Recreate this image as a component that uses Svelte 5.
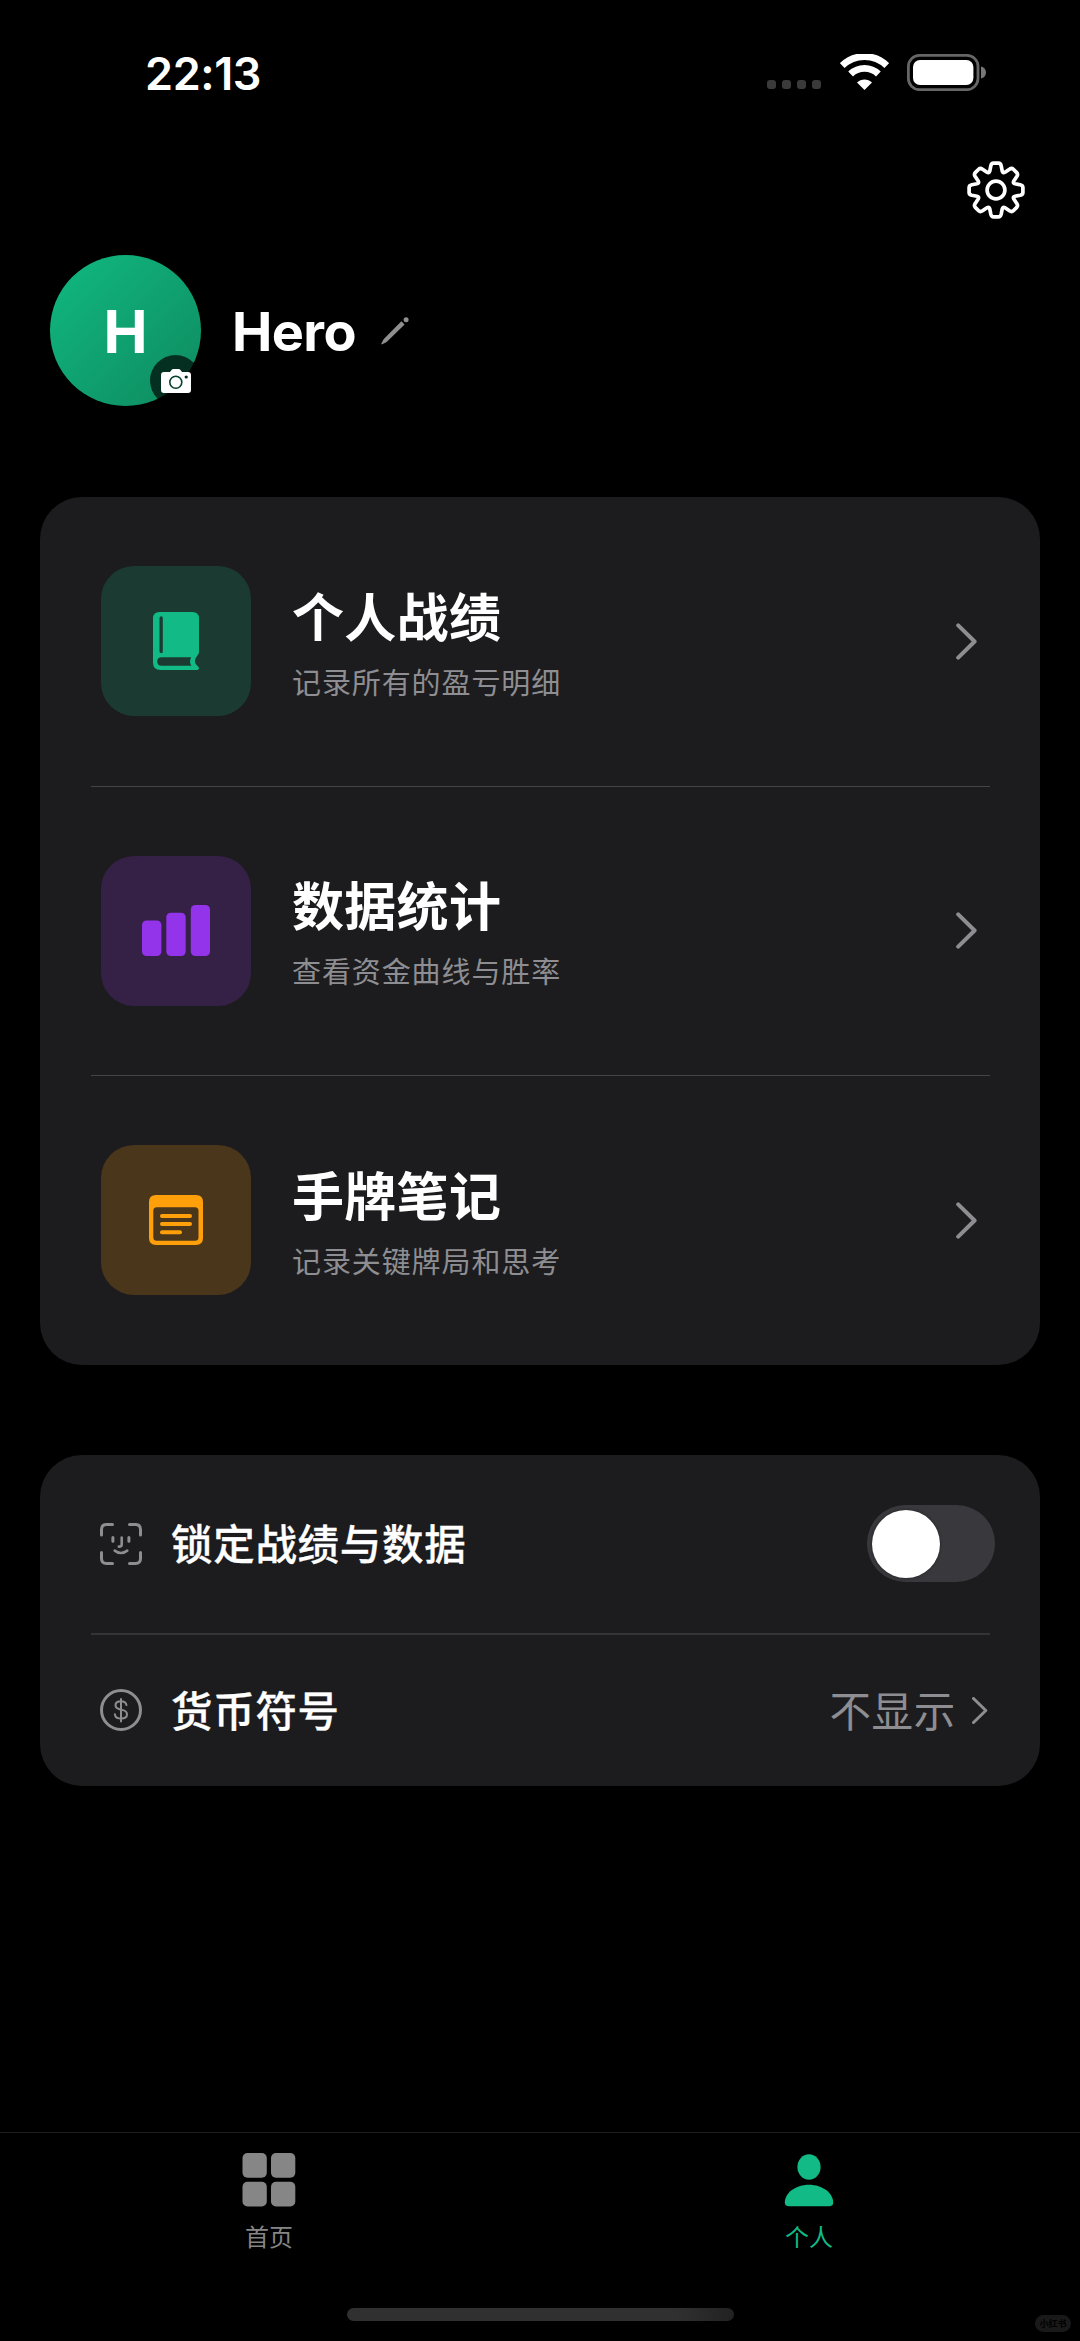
<!--
  Profile screen
  Account header, feature list, settings and the bottom tab bar
-->
<script lang="ts">
  const features = [
    { id: "records", title: "个人战绩", desc: "记录所有的盈亏明细" },
    { id: "stats", title: "数据统计", desc: "查看资金曲线与胜率" },
    { id: "notes", title: "手牌笔记", desc: "记录关键牌局和思考" },
  ];

  let locked = $state(false);
  let activeTab = $state("profile");

  // Eight identical teeth rotated around the centre of the gear
  function gearPath() {
    const rotate = (x: number, y: number, i: number) => {
      const a = (i * Math.PI) / 4;
      const px = x * Math.cos(a) - y * Math.sin(a);
      const py = x * Math.sin(a) + y * Math.cos(a);
      return `${px.toFixed(2)} ${py.toFixed(2)}`;
    };
    let d = "";
    for (let i = 0; i < 8; i++) {
      const p = (x: number, y: number) => rotate(x, y, i);
      d += `${i === 0 ? "M" : "L"}${p(-6.2, -19)}L${p(-5.2, -24.2)}Q${p(-4.6, -26.9)} ${p(-2.4, -26.9)}`;
      d += `L${p(2.4, -26.9)}Q${p(4.6, -26.9)} ${p(5.2, -24.2)}L${p(6.2, -19)}Q${p(6.8, -16.6)} ${rotate(-6.2, -19, i + 1)}`;
    }
    return d + "Z";
  }
</script>

<div class="screen">
  <div class="status">
    <span class="status__time">22:13</span>
    <div class="status__icons">
      <div class="status__dots"><i></i><i></i><i></i><i></i></div>
      <svg class="status__wifi" width="49" height="37" viewBox="0 0 49 37" fill="none">
        <path d="M2.2 11.6a32 32 0 0 1 44.6 0" stroke="#fff" stroke-width="6.8" />
        <path d="M10.6 20a20 20 0 0 1 27.8 0" stroke="#fff" stroke-width="6.8" />
        <path d="M24.5 36 17 28.6c4.2-4.2 10.8-4.2 15 0z" fill="#fff" />
      </svg>
      <svg class="status__battery" width="80" height="37" viewBox="0 0 80 37">
        <rect x="1.4" y="1.4" width="69.6" height="34.2" rx="11" fill="none" stroke="#666" stroke-width="2.8" />
        <rect x="6" y="6" width="60.4" height="25" rx="7" fill="#fff" />
        <path d="M74 12.5c3 .6 5 3 5 6s-2 5.4-5 6z" fill="#777" />
      </svg>
    </div>
  </div>

  <div class="toolbar">
    <button class="icon-btn" aria-label="设置">
      <svg width="60" height="60" viewBox="-30 -30 60 60" fill="none" stroke="#fff" stroke-width="3.7" stroke-linejoin="round">
        <path d={gearPath()} />
        <circle r="8.9" />
      </svg>
    </button>
  </div>

  <header class="profile">
    <div class="avatar">
      H
      <span class="avatar__badge">
        <svg width="30" height="24" viewBox="0 0 30 24">
          <path d="M3 3h6l1.5-2Q11.2 0 12.5 0h5q1.3 0 2 1L21 3h6q3 0 3 3v15q0 3-3 3H3q-3 0-3-3V6q0-3 3-3z" fill="#fff" />
          <circle cx="14.8" cy="13.3" r="6" fill="none" stroke="#07402c" stroke-width="1.6" />
          <circle cx="25.2" cy="8" r="1.6" fill="#06291d" />
        </svg>
      </span>
    </div>
    <h1 class="profile__name">Hero</h1>
    <svg class="profile__edit" width="28" height="28" viewBox="0 0 28 28" fill="#8f8f8f">
      <path d="M20.4 4.2 23.6 7.4 6.2 24.4Q5.6 25 4.8 25.4L1.2 27.3Q0 27.6.4 26.4L2.3 22.8Q2.7 22 3.3 21.4z" />
      <circle cx="25.1" cy="2.7" r="2.5" />
    </svg>
  </header>

  <section class="card">
    {#each features as item}
      <div class="feature">
        <div class="feature__icon feature__icon--{item.id}">
          {#if item.id === "records"}
            <svg width="46" height="58" viewBox="0 0 46 58">
              <path
                fill="#12bb85"
                fill-rule="evenodd"
                d="M6.5 0h33q6.5 0 6.5 6.5V40q0 1.6-1.2 3-3 3.4-3 6t3 5.2Q46 55.3 46 56.3T44.6 58H7.5Q0 58 0 50.5V6.5Q0 0 6.5 0zM8.2 4.2Q6.5 4.2 6.5 6V39.5q0 1.7 1.7 1.7t1.6-1.7V6q0-1.8-1.6-1.8zM8.8 45.2Q4.2 45.2 4.2 49.4t4.6 4.4H38.5Q37 51.6 37 49.4t1.2-4.2z"
              />
            </svg>
          {:else if item.id === "stats"}
            <svg width="68" height="51" viewBox="0 0 68 51" fill="#9333ea">
              <rect y="15.5" width="19.4" height="35.5" rx="4.5" />
              <rect x="24.3" y="7.8" width="19.4" height="43.2" rx="4.5" />
              <rect x="48.8" width="19.2" height="51" rx="4.5" />
            </svg>
          {:else}
            <svg width="54" height="50" viewBox="0 0 54 50" fill="#ff9f0a">
              <path
                fill-rule="evenodd"
                d="M7 0h40q7 0 7 7v36q0 7-7 7H7q-7 0-7-7V7Q0 0 7 0zM7.8 12.3Q4.3 12.3 4.3 15.8V42.3Q4.3 45.8 7.8 45.8H46Q49.5 45.8 49.5 42.3V15.8Q49.5 12.3 46 12.3z"
              />
              <rect x="11" y="19" width="32" height="4" rx="2" />
              <rect x="11" y="27" width="32" height="4" rx="2" />
              <rect x="11" y="35.2" width="22" height="4" rx="2" />
            </svg>
          {/if}
        </div>
        <div class="feature__body">
          <h2 class="feature__title">{item.title}</h2>
          <p class="feature__desc">{item.desc}</p>
        </div>
        <svg class="feature__chevron" width="22" height="37" viewBox="0 0 22 37">
          <path d="M2.2 2.3 18.6 18.5 2.2 34.7" />
        </svg>
      </div>
    {/each}
  </section>

  <section class="card card--settings">
    <div class="setting setting--lock">
      <svg width="42" height="42" viewBox="0 0 42 42" fill="none" stroke="#8e8e92" stroke-width="3" stroke-linecap="round">
        <path d="M1.5 12V6.5q0-5 5-5H12.5M29.5 1.5h6q5 0 5 5V12M40.5 29.5v6q0 5-5 5H29.5M12.5 40.5H6.5q-5 0-5-5V29.5" />
        <path d="M12.9 14.6v3.6M28.9 14.6v3.6" />
        <path d="M21.7 14.6v7q0 2-2 2h-.9" stroke-width="2.6" />
        <path d="M14.7 27.6q6.2 4.8 12.6 0" stroke-width="2.6" />
      </svg>
      <span class="setting__label">锁定战绩与数据</span>
      <button
        class="switch"
        class:switch--on={locked}
        role="switch"
        aria-checked={locked}
        aria-label="锁定战绩与数据"
        onclick={() => (locked = !locked)}
      >
        <span class="switch__thumb"></span>
      </button>
    </div>
    <div class="setting setting--currency">
      <svg width="42" height="42" viewBox="0 0 42 42" fill="none" stroke="#8e8e92">
        <circle cx="21" cy="21" r="19.5" stroke-width="3" />
        <path
          d="M26.5 16.1c-.4-2.4-2.5-3.9-5.5-3.9-3.2 0-5.5 1.6-5.5 4.1 0 2.2 1.5 3.4 4.7 4.1l1.8.5c3.4.8 5 2.1 5 4.4 0 2.6-2.3 4.3-5.9 4.3s-5.9-1.6-6.2-4.3M21 10v22.4"
          stroke-width="2"
          stroke-linecap="round"
        />
      </svg>
      <span class="setting__label">货币符号</span>
      <span class="setting__value">不显示</span>
      <svg class="setting__chevron" width="16" height="27" viewBox="0 0 16 27">
        <path d="M1.5 1.5 13.8 13.5 1.5 25.5" />
      </svg>
    </div>
  </section>

  <nav class="tabs">
    <button class="tab" class:tab--active={activeTab === "home"} onclick={() => (activeTab = "home")}>
      <svg width="54" height="54" viewBox="0 0 54 54" fill="currentColor">
        <rect x=".5" width="24.3" height="24.7" rx="5" />
        <rect x="29" width="24.3" height="24.7" rx="5" />
        <rect x=".5" y="28.7" width="24.3" height="24.7" rx="5" />
        <rect x="29" y="28.7" width="24.3" height="24.7" rx="5" />
      </svg>
      <span>首页</span>
    </button>
    <button class="tab" class:tab--active={activeTab === "profile"} onclick={() => (activeTab = "profile")}>
      <svg width="54" height="54" viewBox="0 0 54 54" fill="currentColor">
        <ellipse cx="27" cy="14" rx="11.6" ry="12.7" />
        <path d="M7 53.3Q2.8 53.3 2.8 49.5C2.8 40 13.5 31.7 27 31.7S51.2 40 51.2 49.5Q51.2 53.3 47 53.3z" />
      </svg>
      <span>个人</span>
    </button>
  </nav>

  <div class="home-indicator"></div>
  <span class="watermark">小红书</span>
</div>

<style>
  :global(body) {
    margin: 0;
    background: #000;
  }

  .screen {
    position: relative;
    display: flex;
    flex-direction: column;
    box-sizing: border-box;
    width: 1080px;
    height: 2341px;
    overflow: hidden;
    background: #000;
    color: #fff;
    font-family: Inter, "Noto Sans CJK SC", sans-serif;
  }

  svg {
    display: block;
    flex-shrink: 0;
  }

  button {
    padding: 0;
    border: none;
    background: none;
    font: inherit;
    color: inherit;
    cursor: pointer;
  }

  /* Status bar */
  .status {
    display: flex;
    justify-content: space-between;
    align-items: center;
    height: 145px;
    padding: 0 93px 0 145px;
    box-sizing: border-box;
  }

  .status__time {
    padding-top: 2px;
    font-size: 45px;
    font-weight: 600;
    line-height: 54px;
    letter-spacing: -0.4px;
  }

  .status__icons {
    display: flex;
    align-items: center;
  }

  .status__dots {
    display: flex;
    gap: 6px;
    margin: 24px 19px 0 0;
  }

  .status__dots i {
    width: 9px;
    height: 9px;
    border-radius: 3px;
    background: #3a3a3a;
  }

  .status__wifi {
    margin-right: 18px;
  }

  /* Toolbar */
  .toolbar {
    display: flex;
    justify-content: flex-end;
    height: 89px;
    padding: 15px 54.5px 0 0;
    box-sizing: border-box;
  }

  .icon-btn {
    height: 60px;
  }

  /* Profile header */
  .profile {
    display: flex;
    align-items: center;
    margin-top: 21px;
    padding-left: 50px;
    height: 151px;
  }

  .avatar {
    position: relative;
    display: flex;
    align-items: center;
    justify-content: center;
    box-sizing: border-box;
    width: 151px;
    height: 151px;
    padding-top: 2px;
    border-radius: 50%;
    background: linear-gradient(135deg, #10b981, #0f8a5f);
    font-size: 59px;
    font-weight: 700;
    line-height: 1;
  }

  .avatar__badge {
    position: absolute;
    right: 0;
    bottom: 0;
    display: flex;
    align-items: center;
    justify-content: center;
    width: 51px;
    height: 51px;
    border-radius: 50%;
    background: rgba(0, 0, 0, 0.68);
  }

  .profile__name {
    margin: 3px 0 0 31px;
    font-size: 54px;
    font-weight: 700;
    line-height: 64px;
    letter-spacing: -0.6px;
  }

  .profile__edit {
    margin-left: 25px;
  }

  /* Cards */
  .card {
    margin: 91px 40px 0;
    border-radius: 42px;
    background: #1c1c1e;
  }

  .feature {
    display: flex;
    align-items: center;
    height: 288.6px;
    padding: 0 62px 0 61px;
  }

  .feature + .feature::before,
  .setting + .setting::before {
    content: "";
    position: absolute;
    top: -1px;
    left: 51px;
    right: 50px;
    height: 1px;
    background: #444447;
  }

  .feature,
  .setting {
    position: relative;
  }

  .feature + .feature {
    margin-top: 1px;
  }

  .feature__icon {
    display: flex;
    align-items: center;
    justify-content: center;
    width: 150px;
    height: 150px;
    border-radius: 33px;
  }

  .feature__icon--records {
    background: #1b3a31;
  }

  .feature__icon--stats {
    background: #352046;
  }

  .feature__icon--notes {
    background: #49361b;
  }

  .feature__body {
    flex: 1;
    margin-left: 41px;
    padding-top: 4px;
  }

  .feature__title {
    margin: 0;
    font-size: 52px;
    font-weight: 700;
    line-height: 74px;
    letter-spacing: 0.3px;
  }

  .feature__desc {
    margin: 7px 0 0;
    color: #8e8e92;
    font-size: 29px;
    font-weight: 400;
    line-height: 42px;
    letter-spacing: 0.9px;
  }

  .feature__chevron path,
  .setting__chevron path {
    fill: none;
    stroke: #8e8e92;
    stroke-width: 4;
    stroke-linecap: round;
    stroke-linejoin: round;
  }

  /* Settings */
  .card--settings {
    margin-top: 90px;
  }

  .setting {
    display: flex;
    align-items: center;
    padding-left: 60px;
  }

  .setting--lock {
    height: 178px;
    padding-right: 45px;
  }

  .setting--currency {
    height: 151px;
    margin-top: 2px;
    padding-right: 52px;
  }

  .setting + .setting::before {
    top: -2px;
    height: 2px;
    background: #343437;
  }

  .setting__label {
    flex: 1;
    margin-left: 29px;
    padding-top: 3px;
    font-size: 41.5px;
    font-weight: 500;
    line-height: 60px;
    letter-spacing: 0.7px;
    -webkit-text-stroke: 0.3px currentColor;
  }

  .setting__value {
    padding-top: 3px;
    color: #8e8e92;
    font-size: 41.5px;
    line-height: 60px;
    letter-spacing: 0.7px;
  }

  .setting__chevron {
    margin-left: 16px;
  }

  .setting__chevron path {
    stroke-width: 3;
  }

  .switch {
    display: flex;
    align-items: center;
    box-sizing: border-box;
    width: 128px;
    height: 77px;
    padding: 0 4.5px;
    border-radius: 39px;
    background: #39393d;
  }

  .switch--on {
    justify-content: flex-end;
    background: #10b981;
  }

  .switch__thumb {
    width: 68px;
    height: 68px;
    border-radius: 50%;
    background: #fff;
    box-shadow: 0 0 3px rgba(0, 0, 0, 0.5);
  }

  /* Tab bar */
  .tabs {
    display: flex;
    height: 175px;
    margin-top: auto;
    border-top: 1px solid #1f1f1f;
  }

  .tab {
    flex: 1;
    display: flex;
    flex-direction: column;
    align-items: center;
    padding: 20px 2px 0 0;
    color: #868686;
    font-size: 24px;
    line-height: 34px;
  }

  .tab span {
    margin-top: 14px;
  }

  .tab--active {
    color: #12bb85;
  }

  .home-indicator {
    width: 387px;
    height: 13px;
    margin: 0 auto 20px;
    border-radius: 7px;
    background: linear-gradient(90deg, #303030 85%, #222);
  }

  .watermark {
    position: absolute;
    right: 9px;
    bottom: 9px;
    width: 36px;
    height: 17px;
    border-radius: 9px;
    background: #191919;
    color: #000;
    font-size: 9px;
    font-weight: 700;
    line-height: 17px;
    text-align: center;
  }
</style>
